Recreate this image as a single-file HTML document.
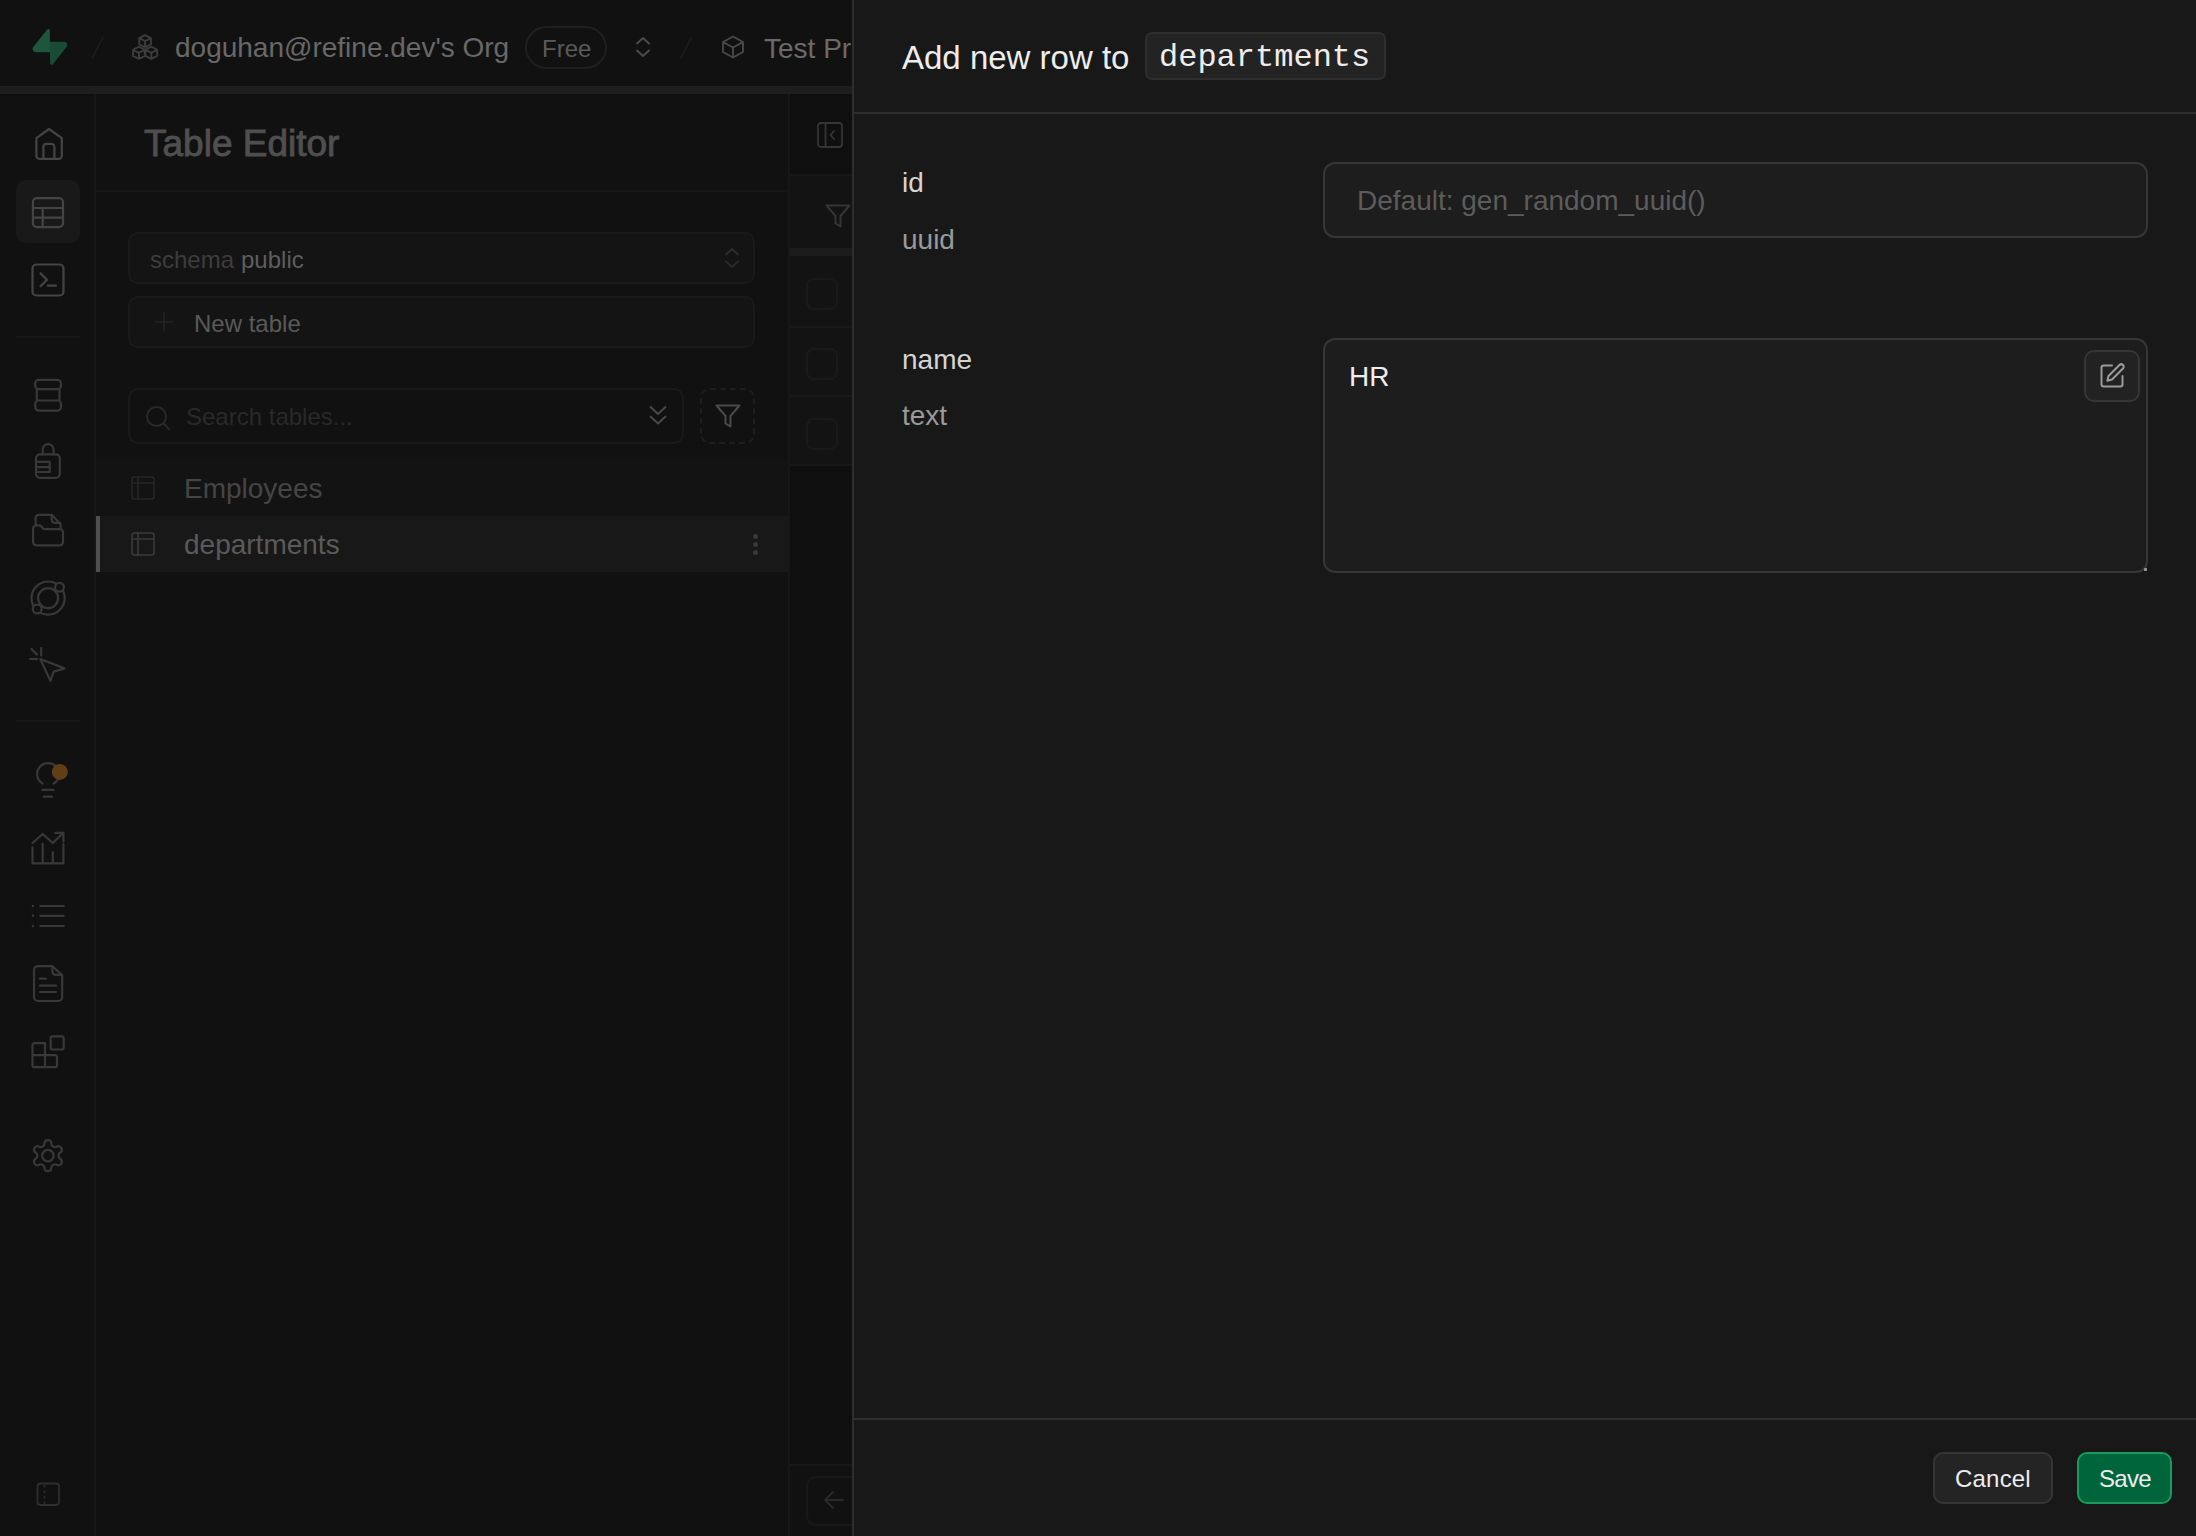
<!DOCTYPE html>
<html><head><meta charset="utf-8">
<style>
*{box-sizing:border-box;margin:0;padding:0}
html,body{width:2196px;height:1536px;overflow:hidden;background:#111111;font-family:"Liberation Sans",sans-serif}
.a{position:absolute}
svg{position:absolute;display:block;overflow:visible}
.ic{fill:none;stroke:#4a4a4a;stroke-width:1.5;stroke-linecap:round;stroke-linejoin:round}
.t{position:absolute;white-space:nowrap;line-height:1}
</style></head><body>

<!-- ===== LEFT (dimmed app) ===== -->
<div class="a" id="left" style="left:0;top:0;width:852px;height:1536px;background:#111111;overflow:hidden">
  <!-- top bar -->
  <div class="a" style="left:0;top:0;width:852px;height:86px;background:#111111"></div>
  <div class="a" style="left:0;top:86px;width:852px;height:8px;background:#1e1e1e"></div>
  <div class="a" style="left:0;top:94px;width:852px;height:2px;background:#0f0f0f"></div>

  <!-- logo -->
  <svg style="left:32px;top:29px" width="36" height="36" viewBox="0 0 109 113">
    <path d="M63.7 110.3c-2.9 3.6-8.7 1.6-8.8-3l-1-67.5h45.4c8.2 0 12.8 9.5 7.7 15.9z" fill="#194b35"/>
    <path d="M45.3 2.1c2.9-3.6 8.7-1.6 8.8 3l.4 67.5H9.8c-8.2 0-12.8-9.5-7.7-15.9z" fill="#1d563c"/>
  </svg>
  <svg style="left:0;top:0" width="852" height="86"><line x1="92" y1="58.5" x2="103.5" y2="36.5" stroke="#1e1e1e" stroke-width="1.5"/><line x1="680.5" y1="59" x2="691.5" y2="37" stroke="#1e1e1e" stroke-width="1.5"/></svg>

  <!-- org icon (3 cubes) -->
  <svg style="left:0;top:0" width="200" height="86" viewBox="0 0 200 86"><path d="M145.1 35.1 L151.0 38.150000000000006 V44.25 L145.1 47.300000000000004 L139.2 44.25 V38.150000000000006 Z M139.2 38.150000000000006 L145.1 41.2 L151.0 38.150000000000006 M145.1 41.2 V47.300000000000004 M138.9 46.699999999999996 L144.8 49.75 V55.849999999999994 L138.9 58.9 L133.0 55.849999999999994 V49.75 Z M133.0 49.75 L138.9 52.8 L144.8 49.75 M138.9 52.8 V58.9 M151.3 46.699999999999996 L157.20000000000002 49.75 V55.849999999999994 L151.3 58.9 L145.4 55.849999999999994 V49.75 Z M145.4 49.75 L151.3 52.8 L157.20000000000002 49.75 M151.3 52.8 V58.9" fill="none" stroke="#3c3c3c" stroke-width="1.9" stroke-linejoin="round" stroke-linecap="round"/></svg>
  <div class="t" style="left:175px;top:34px;font-size:28px;color:#686868">doguhan@refine.dev's Org</div>
  <div class="a" style="left:525px;top:26px;width:82px;height:43px;border:2px solid #1f1f1f;border-radius:22px"></div>
  <div class="t" style="left:542px;top:37px;font-size:24px;color:#5a5a5a">Free</div>
  <svg class="ic" style="left:636px;top:37px" width="14" height="20" viewBox="0 0 14 20"><path d="M1 6.5 7 1l6 5.5 M1 13.5 7 19l6-5.5" stroke-width="2"/></svg>
  <svg class="ic" style="left:721px;top:35px" width="24" height="24" viewBox="0 0 24 24"><path d="M12 1.5 22 7v10l-10 5.5L2 17V7z M2 7l10 5.5L22 7 M12 12.5v10" stroke-width="1.8"/></svg>
  <div class="t" style="left:764px;top:35px;font-size:28px;color:#6a6a6a">Test Project</div>

  <!-- icon sidebar -->
  <div class="a" style="left:94px;top:94px;width:2px;height:1442px;background:#171717"></div>
  <div class="a" style="left:16px;top:180px;width:64px;height:63px;background:#191919;border-radius:10px"></div>
  <div class="a" style="left:16px;top:336px;width:64px;height:2px;background:#171717"></div>
  <div class="a" style="left:16px;top:720px;width:64px;height:2px;background:#171717"></div>

  <!-- sidebar icons (pixel coords) -->
  <svg style="left:0;top:0" width="96" height="1536" viewBox="0 0 96 1536">
   <g fill="none" stroke="#444444" stroke-width="2.2" stroke-linecap="round" stroke-linejoin="round">
    <!-- home -->
    <path d="M49 129 L61.8 138.2 V155.8 a3 3 0 0 1 -3 3 H39.4 a3 3 0 0 1 -3 -3 V138.2 Z"/>
    <path d="M43.4 158.5 V146.9 a3 3 0 0 1 3 -3 H51.4 a3 3 0 0 1 3 3 V158.5"/>
    <!-- table -->
    <rect x="32.9" y="198.2" width="30.1" height="28.9" rx="4"/>
    <path d="M33 208 H63 M33 217.7 H63 M42.7 208 V227"/>
    <!-- terminal -->
    <rect x="32.5" y="264.5" width="31" height="31" rx="4"/>
    <path d="M40.5 273.4 L47 279.8 L40.5 286.2 M47.8 285.6 H56"/>
   </g>
   <g fill="none" stroke="#383838" stroke-width="2.2" stroke-linecap="round" stroke-linejoin="round">
    <!-- database -->
    <rect x="35.2" y="379.8" width="25.8" height="9.4" rx="3.5"/>
    <path d="M36.8 389.2 V400.5 M59.5 389.2 V400.5"/>
    <rect x="35.2" y="400.5" width="25.8" height="10.1" rx="3.5"/>
    <!-- auth -->
    <path d="M42.7 454.4 V449.6 a5.45 5.45 0 0 1 10.9 0 V454.4"/>
    <rect x="36" y="454.4" width="23.8" height="23.4" rx="4"/>
    <path d="M36 461.8 H49.7 V472 H36 M36 467.2 H49.7"/>
    <!-- storage -->
    <path d="M35.6 524.5 V518 a3.2 3.2 0 0 1 3.2 -3.2 H51.8 L60.6 524.2 V529"/>
    <path d="M51.8 515 V519.8 a3 3 0 0 0 3 3 H60"/>
    <path d="M33.1 528.6 a3.2 3.2 0 0 1 3.2 -3.2 H40.3 L43.8 529.1 H59.8 a3.2 3.2 0 0 1 3.2 3.2 V542.1 a3.2 3.2 0 0 1 -3.2 3.2 H36.3 a3.2 3.2 0 0 1 -3.2 -3.2 Z"/>
    <!-- realtime -->
    <circle cx="48.1" cy="598.1" r="10"/>
    <circle cx="48.1" cy="598.1" r="16.6"/>
    <circle cx="59.5" cy="587.2" r="4.4" fill="#111111"/>
    <circle cx="37.2" cy="609" r="4.4" fill="#111111"/>
    <!-- edge functions -->
    <path d="M40.3 659 L64.5 668.4 L53.6 671.6 L50.5 681 Z"/>
    <path d="M41.2 648 V655.5 M31.5 649 L37 654.5 M30 659 H37"/>
    <!-- advisors -->
    <path d="M42.7 783.6 A11 11 0 1 1 53.6 783.6"/>
    <path d="M42.3 789.8 H53.6 M43.8 796.7 H52"/>
    <!-- reports -->
    <path d="M32.5 843 L42.7 834 L52.8 843 L63.4 832.8 M55.2 832.8 H63.4 V841.4"/>
    <path d="M32.5 847.3 V863.3 H63.4 V844 M42.7 843.8 V863.3 M52.8 852.3 V863.3"/>
    <!-- logs -->
    <path d="M40.3 906 H63.7 M40.3 915.8 H63.7 M40.3 926 H63.7"/>
    <path d="M32.9 906 h0.1 M32.9 915.8 h0.1 M32.9 926 h0.1" stroke-width="2.4"/>
    <!-- docs -->
    <path d="M52.4 966.2 H38 a4 4 0 0 0 -4 4 V997 a4 4 0 0 0 4 4 H58.2 a4 4 0 0 0 4 -4 V975.2 Z"/>
    <path d="M52.4 966.2 V971.4 a3.5 3.5 0 0 0 3.5 3.5 H62"/>
    <path d="M40 978.7 H45.8 M40 985.7 H56 M40 992 H56"/>
    <!-- integrations -->
    <path d="M45 1043.2 H34.5 a2 2 0 0 0 -2 2 V1065.2 a2 2 0 0 0 2 2 H55 a2 2 0 0 0 2 -2 V1057.2 a2 2 0 0 0 -2 -2 H45 Z M32.5 1055.2 H45 M45 1055.2 V1067.2"/>
    <rect x="50.7" y="1036.3" width="13" height="13.2" rx="2"/>
   </g>
   <!-- settings -->
   <g transform="translate(47.9 1155.7) scale(1.55) translate(-12 -12)" fill="none" stroke="#383838" stroke-width="1.45" stroke-linecap="round" stroke-linejoin="round">
    <path d="M12.22 2h-.44a2 2 0 0 0-2 2v.18a2 2 0 0 1-1 1.73l-.43.25a2 2 0 0 1-2 0l-.15-.08a2 2 0 0 0-2.73.73l-.22.38a2 2 0 0 0 .73 2.73l.15.1a2 2 0 0 1 1 1.72v.51a2 2 0 0 1-1 1.74l-.15.09a2 2 0 0 0-.73 2.73l.22.38a2 2 0 0 0 2.73.73l.15-.08a2 2 0 0 1 2 0l.43.25a2 2 0 0 1 1 1.73V20a2 2 0 0 0 2 2h.44a2 2 0 0 0 2-2v-.18a2 2 0 0 1 1-1.730l.43-.25a2 2 0 0 1 2 0l.15.08a2 2 0 0 0 2.73-.73l.22-.39a2 2 0 0 0-.73-2.73l-.15-.08a2 2 0 0 1-1-1.74v-.5a2 2 0 0 1 1-1.740l.15-.09a2 2 0 0 0 .73-2.73l-.22-.38a2 2 0 0 0-2.73-.73l-.15.08a2 2 0 0 1-2 0l-.43-.25a2 2 0 0 1-1-1.73V4a2 2 0 0 0-2-2z"/>
    <circle cx="12" cy="12" r="3.7"/>
   </g>
   <circle cx="59.8" cy="771.9" r="8" fill="#5f3e18"/>
   <!-- bottom panel icon -->
   <rect x="37.5" y="1483.5" width="21.5" height="21.5" rx="3" fill="none" stroke="#2e2e2e" stroke-width="1.8"/>
   <path d="M44.5 1485 V1504" stroke="#2a2a2a" stroke-width="1.8" stroke-dasharray="2.5 3" fill="none"/>
  </svg>

  <!-- ===== Table editor panel ===== -->
  <div class="a" style="left:96px;top:94px;width:692px;height:96px;background:#111111"></div>
  <div class="a" style="left:96px;top:190px;width:692px;height:2px;background:#161616"></div>
  <div class="t" style="left:144px;top:125px;font-size:37px;font-weight:400;color:#4f4f4f;-webkit-text-stroke:0.9px #4f4f4f">Table Editor</div>

  <!-- schema select -->
  <div class="a" style="left:128px;top:232px;width:627px;height:52px;background:#141414;border:2px solid #1a1a1a;border-radius:10px"></div>
  <div class="t" style="left:150px;top:248px;font-size:24px;color:#3d3d3d">schema</div>
  <div class="t" style="left:241px;top:248px;font-size:24px;color:#5e5e5e">public</div>
  <svg class="ic" style="left:725px;top:248px" width="14" height="20" viewBox="0 0 14 20"><path d="M1 6.5 7 1l6 5.5 M1 13.5 7 19l6-5.5" stroke="#2b2b2b" stroke-width="2"/></svg>

  <!-- new table -->
  <div class="a" style="left:128px;top:296px;width:627px;height:52px;background:#141414;border:2px solid #1a1a1a;border-radius:10px"></div>
  <svg class="ic" style="left:154px;top:312px" width="20" height="20" viewBox="0 0 20 20"><path d="M10 1v18 M1 10h18" stroke="#242424" stroke-width="1.6"/></svg>
  <div class="t" style="left:194px;top:312px;font-size:24px;color:#5a5a5a">New table</div>

  <!-- search -->
  <div class="a" style="left:128px;top:388px;width:556px;height:56px;background:#111111;border:2px solid #1a1a1a;border-radius:10px"></div>
  <svg class="ic" style="left:145px;top:405px" width="26" height="26" viewBox="0 0 26 26"><circle cx="11.5" cy="11.5" r="9.5" stroke="#292929" stroke-width="2"/><path d="M18.5 18.5l5.5 5.5" stroke="#292929" stroke-width="2"/></svg>
  <div class="t" style="left:186px;top:405px;font-size:24px;color:#292929">Search tables...</div>
  <svg class="ic" style="left:649px;top:405px" width="18" height="21" viewBox="0 0 18 21"><path d="M1.5 2l7.5 7 7.5-7 M1.5 11.5l7.5 7 7.5-7" stroke="#4a4a4a" stroke-width="1.8"/></svg>
  <div class="a" style="left:700px;top:388px;width:55px;height:56px;border:2px dashed #1e1e1e;border-radius:10px"></div>
  <svg class="ic" style="left:715px;top:404px" width="26" height="24" viewBox="0 0 26 24"><path d="M1.5 1.5h23L15.5 12v10.5l-5-3V12z" stroke="#4a4a4a" stroke-width="2"/></svg>

  <!-- table list -->
  <div class="a" style="left:96px;top:459px;width:692px;height:57px;background:#131313"></div>
  <div class="a" style="left:96px;top:516px;width:692px;height:56px;background:#181818"></div>
  <div class="a" style="left:96px;top:516px;width:4px;height:56px;background:#4f4f4f"></div>
  <svg class="ic" style="left:131px;top:476px" width="24" height="24" viewBox="0 0 24 24"><rect x="1" y="1" width="22" height="22" rx="2.5" stroke="#262626" stroke-width="1.6"/><path d="M1 7h22 M7 1v22" stroke="#262626" stroke-width="1.6"/></svg>
  <div class="t" style="left:184px;top:475px;font-size:28px;color:#454545">Employees</div>
  <svg class="ic" style="left:131px;top:532px" width="24" height="24" viewBox="0 0 24 24"><rect x="1" y="1" width="22" height="22" rx="2.5" stroke="#3a3a3a" stroke-width="1.6"/><path d="M1 7h22 M7 1v22" stroke="#3a3a3a" stroke-width="1.6"/></svg>
  <div class="t" style="left:184px;top:531px;font-size:28px;color:#5a5a5a">departments</div>
  <div class="a" style="left:753px;top:534px;width:5px;height:5px;border-radius:50%;background:#383838"></div>
  <div class="a" style="left:753px;top:542px;width:5px;height:5px;border-radius:50%;background:#383838"></div>
  <div class="a" style="left:753px;top:550px;width:5px;height:5px;border-radius:50%;background:#383838"></div>

  <!-- grid column strip 789-852 -->
  <div class="a" style="left:788px;top:94px;width:2px;height:1442px;background:#171717"></div>
  <div class="a" style="left:790px;top:94px;width:62px;height:80px;background:#0f0f0f"></div>
  <div class="a" style="left:790px;top:174px;width:62px;height:2px;background:#171717"></div>
  <div class="a" style="left:790px;top:176px;width:62px;height:72px;background:#131313"></div>
  <svg class="ic" style="left:817px;top:122px" width="26" height="26" viewBox="0 0 26 26"><rect x="1" y="1" width="24" height="24" rx="3" stroke="#353535" stroke-width="1.8"/><path d="M8.5 1v24 M17 9l-3.5 4 3.5 4" stroke="#353535" stroke-width="1.8"/></svg>
  <svg class="ic" style="left:825px;top:204px" width="26" height="24" viewBox="0 0 26 24"><path d="M1.5 1.5h23L15.5 12v10.5l-5-3V12z" stroke="#353535" stroke-width="2"/></svg>
  <div class="a" style="left:790px;top:248px;width:62px;height:8px;background:#1c1c1c"></div>
  <div class="a" style="left:790px;top:256px;width:62px;height:209px;background:#131313"></div>
  <div class="a" style="left:790px;top:326px;width:62px;height:2px;background:#181818"></div>
  <div class="a" style="left:790px;top:395px;width:62px;height:2px;background:#181818"></div>
  <div class="a" style="left:790px;top:464px;width:62px;height:2px;background:#181818"></div>
  <div class="a" style="left:806px;top:278px;width:32px;height:32px;border:2px solid #1a1a1a;border-radius:8px"></div>
  <div class="a" style="left:806px;top:348px;width:32px;height:32px;border:2px solid #1a1a1a;border-radius:8px"></div>
  <div class="a" style="left:806px;top:418px;width:32px;height:32px;border:2px solid #1a1a1a;border-radius:8px"></div>
  <div class="a" style="left:790px;top:466px;width:62px;height:998px;background:#0f0f0f"></div>
  <div class="a" style="left:790px;top:1464px;width:62px;height:2px;background:#171717"></div>
  <div class="a" style="left:806px;top:1476px;width:60px;height:50px;border:2px solid #191919;border-radius:10px"></div>
  <svg class="ic" style="left:823px;top:1490px" width="22" height="20" viewBox="0 0 22 20"><path d="M20 10H3 M10 2 2 10l8 8" stroke="#2a2a2a" stroke-width="1.8"/></svg>
</div>

<!-- ===== RIGHT PANEL ===== -->
<div class="a" id="panel" style="left:852px;top:0;width:1344px;height:1536px;background:#181818">
  <div class="a" style="left:0;top:0;width:2px;height:1536px;background:#2e2e2e"></div>
  <div class="a" style="left:2px;top:112px;width:1342px;height:2px;background:#2e2e2e"></div>
  <div class="t" style="left:50px;top:41px;font-size:33px;color:#ededed">Add new row to</div>
  <div class="a" style="left:293px;top:32px;width:241px;height:48px;background:#232323;border:2px solid #2e2e2e;border-radius:7px"></div>
  <div class="t" style="left:307px;top:42px;font-family:'Liberation Mono',monospace;font-size:32px;color:#ededed">departments</div>

  <!-- id -->
  <div class="t" style="left:50px;top:169px;font-size:28px;color:#d4d4d4">id</div>
  <div class="t" style="left:50px;top:226px;font-size:28px;color:#9a9a9a">uuid</div>
  <div class="a" style="left:471px;top:162px;width:825px;height:76px;background:#1d1d1d;border:2px solid #363636;border-radius:12px"></div>
  <div class="t" style="left:505px;top:187px;font-size:28px;color:#5c5c5c">Default: gen_random_uuid()</div>

  <!-- name -->
  <div class="t" style="left:50px;top:346px;font-size:28px;color:#d4d4d4">name</div>
  <div class="t" style="left:50px;top:402px;font-size:28px;color:#9a9a9a">text</div>
  <div class="a" style="left:471px;top:338px;width:825px;height:235px;background:#1d1d1d;border:2px solid #363636;border-radius:12px"></div>
  <div class="t" style="left:497px;top:363px;font-size:28px;color:#ededed">HR</div>
  <div class="a" style="left:1232px;top:350px;width:56px;height:52px;background:#222222;border:2px solid #363636;border-radius:10px"></div>
  <svg class="ic" style="left:1246px;top:362px" width="28" height="28" viewBox="0 0 24 24"><path d="M12 3H5a2 2 0 0 0-2 2v14a2 2 0 0 0 2 2h14a2 2 0 0 0 2-2v-7 M18.4 2.6a2.1 2.1 0 1 1 3 3L12 15l-4 1 1-4z" stroke="#9c9c9c" stroke-width="1.7"/></svg>

  <div class="a" style="left:1292px;top:568px;width:3px;height:3px;background:#9a9a9a;border-radius:1px"></div>
  <!-- footer -->
  <div class="a" style="left:2px;top:1418px;width:1342px;height:2px;background:#2e2e2e"></div>
  <div class="a" style="left:1081px;top:1452px;width:120px;height:52px;background:#242424;border:2px solid #353535;border-radius:10px"></div>
  <div class="t" style="left:1103px;top:1467px;font-size:24px;color:#ededed;letter-spacing:0.2px">Cancel</div>
  <div class="a" style="left:1225px;top:1452px;width:95px;height:52px;background:#00653b;border:2px solid #189b5e;border-radius:10px"></div>
  <div class="t" style="left:1247px;top:1467px;font-size:24px;color:#ededed;letter-spacing:-0.7px">Save</div>
</div>
</body></html>
